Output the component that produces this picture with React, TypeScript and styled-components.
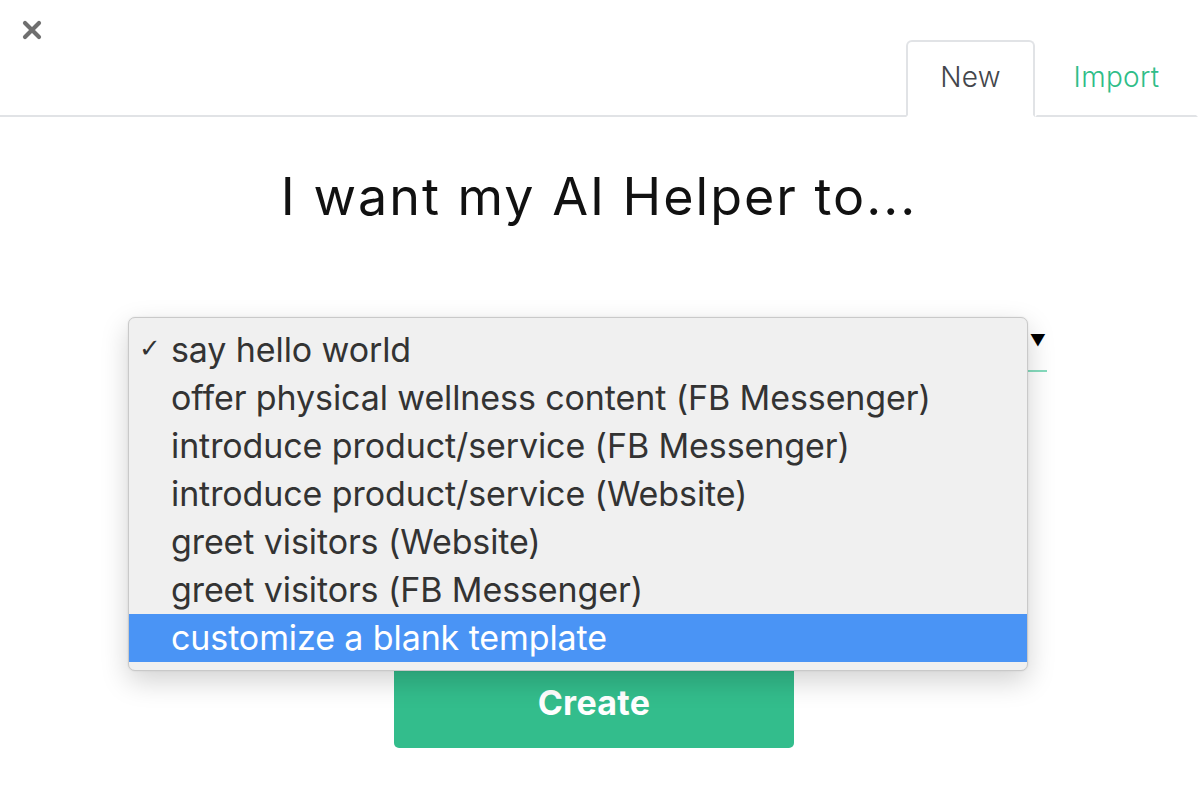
import React from "react";
import styled, { createGlobalStyle } from "styled-components";

const Global = createGlobalStyle`
  html, body { margin: 0; padding: 0; background: #ffffff; }
  body { font-family: "Inter", "Liberation Sans", sans-serif; }
  * { box-sizing: border-box; }
`;

const Page = styled.div`
  width: 1198px;
  height: 796px;
  background: #ffffff;
  overflow: hidden;
  display: flex;
  flex-direction: column;
`;

const Header = styled.div`
  height: 117px;
  border-bottom: 2px solid #e1e3e6;
  display: flex;
  justify-content: space-between;
  align-items: flex-start;
  padding: 0 0 0 22px;
`;

const CloseButton = styled.button`
  margin-top: 20px;
  width: 20px;
  height: 20px;
  padding: 0;
  border: none;
  background: none;
  display: flex;
  cursor: pointer;
`;

const Tabs = styled.div`
  display: flex;
  align-self: flex-end;
  margin-bottom: -2px;
`;

const Tab = styled.div<{ $active?: boolean }>`
  height: 77px;
  width: ${(p) => (p.$active ? "129px" : "163px")};
  display: flex;
  align-items: center;
  justify-content: center;
  padding-bottom: 4px;
  font-size: 28px;
  font-weight: 300;
  letter-spacing: 0.3px;
  color: ${(p) => (p.$active ? "#43464b" : "#2fbd88")};
  background: #ffffff;
  border: 2px solid ${(p) => (p.$active ? "#e1e3e6" : "transparent")};
  border-bottom: 2px solid ${(p) => (p.$active ? "#ffffff" : "#e1e3e6")};
  border-radius: 6px 6px 0 0;
`;

const Main = styled.div`
  display: flex;
  flex-direction: column;
  align-items: center;
`;

const Title = styled.h1`
  margin: 50px 0 0 0;
  font-size: 52px;
  font-weight: 400;
  color: #111111;
  letter-spacing: 2px;
  line-height: 60px;
`;

const Field = styled.div`
  position: relative;
  margin-top: 91px;
  width: 896px;
  height: 54px;
  border-bottom: 2px solid #86dcbe;
  display: flex;
  justify-content: flex-end;
  align-items: flex-start;
`;

const Arrow = styled.span`
  margin-top: 14px;
  margin-right: 1px;
  font-size: 16px;
  color: #000;
  line-height: 1;
`;

const Menu = styled.ul`
  position: absolute;
  left: -23px;
  top: -1px;
  width: 900px;
  margin: 0;
  padding: 8px 0 8px 0;
  list-style: none;
  background: #f0f0f0;
  border: 1px solid #c9c9c9;
  border-radius: 7px;
  box-shadow: 0 10px 28px rgba(0, 0, 0, 0.18), 0 0 2px rgba(0, 0, 0, 0.1);
  z-index: 2;
`;

const Option = styled.li<{ $highlighted?: boolean }>`
  height: 48px;
  display: flex;
  align-items: center;
  padding-left: 42px;
  padding-bottom: 2px;
  position: relative;
  font-size: 34px;
  letter-spacing: -0.1px;
  color: ${(p) => (p.$highlighted ? "#ffffff" : "#333333")};
  background: ${(p) => (p.$highlighted ? "#4a94f5" : "transparent")};
`;

const Check = styled.span`
  position: absolute;
  left: 10px;
  top: 7px;
  font-size: 26px;
  color: #333;
  font-family: "DejaVu Sans", sans-serif;
`;

const CreateButton = styled.button`
  margin-top: 291px;
  width: 400px;
  height: 85px;
  border: none;
  border-radius: 5px;
  background: #33bd8c;
  color: #ffffff;
  font-family: "Inter", "Liberation Sans", sans-serif;
  font-size: 34px;
  font-weight: 700;
  letter-spacing: 0.3px;
  padding: 0 0 6px 0;
  margin-right: 10px;
`;

const options = [
  "say hello world",
  "offer physical wellness content (FB Messenger)",
  "introduce product/service (FB Messenger)",
  "introduce product/service (Website)",
  "greet visitors (Website)",
  "greet visitors (FB Messenger)",
  "customize a blank template",
];

export default function App() {
  return (
    <Page>
      <Global />
      <Header>
        <CloseButton aria-label="close">
          <svg width="20" height="20" viewBox="0 0 20 20">
            <path d="M3 3 L17 17 M17 3 L3 17" stroke="#6f6f6f" strokeWidth="4.2" strokeLinecap="round" />
          </svg>
        </CloseButton>
        <Tabs>
          <Tab $active>New</Tab>
          <Tab>Import</Tab>
        </Tabs>
      </Header>
      <Main>
        <Title>I want my AI Helper to...</Title>
        <Field>
          <Arrow>▼</Arrow>
          <Menu>
            {options.map((o, i) => (
              <Option key={o} $highlighted={i === options.length - 1}>
                {i === 0 && <Check>✓</Check>}
                {o}
              </Option>
            ))}
          </Menu>
        </Field>
        <CreateButton>Create</CreateButton>
      </Main>
    </Page>
  );
}
